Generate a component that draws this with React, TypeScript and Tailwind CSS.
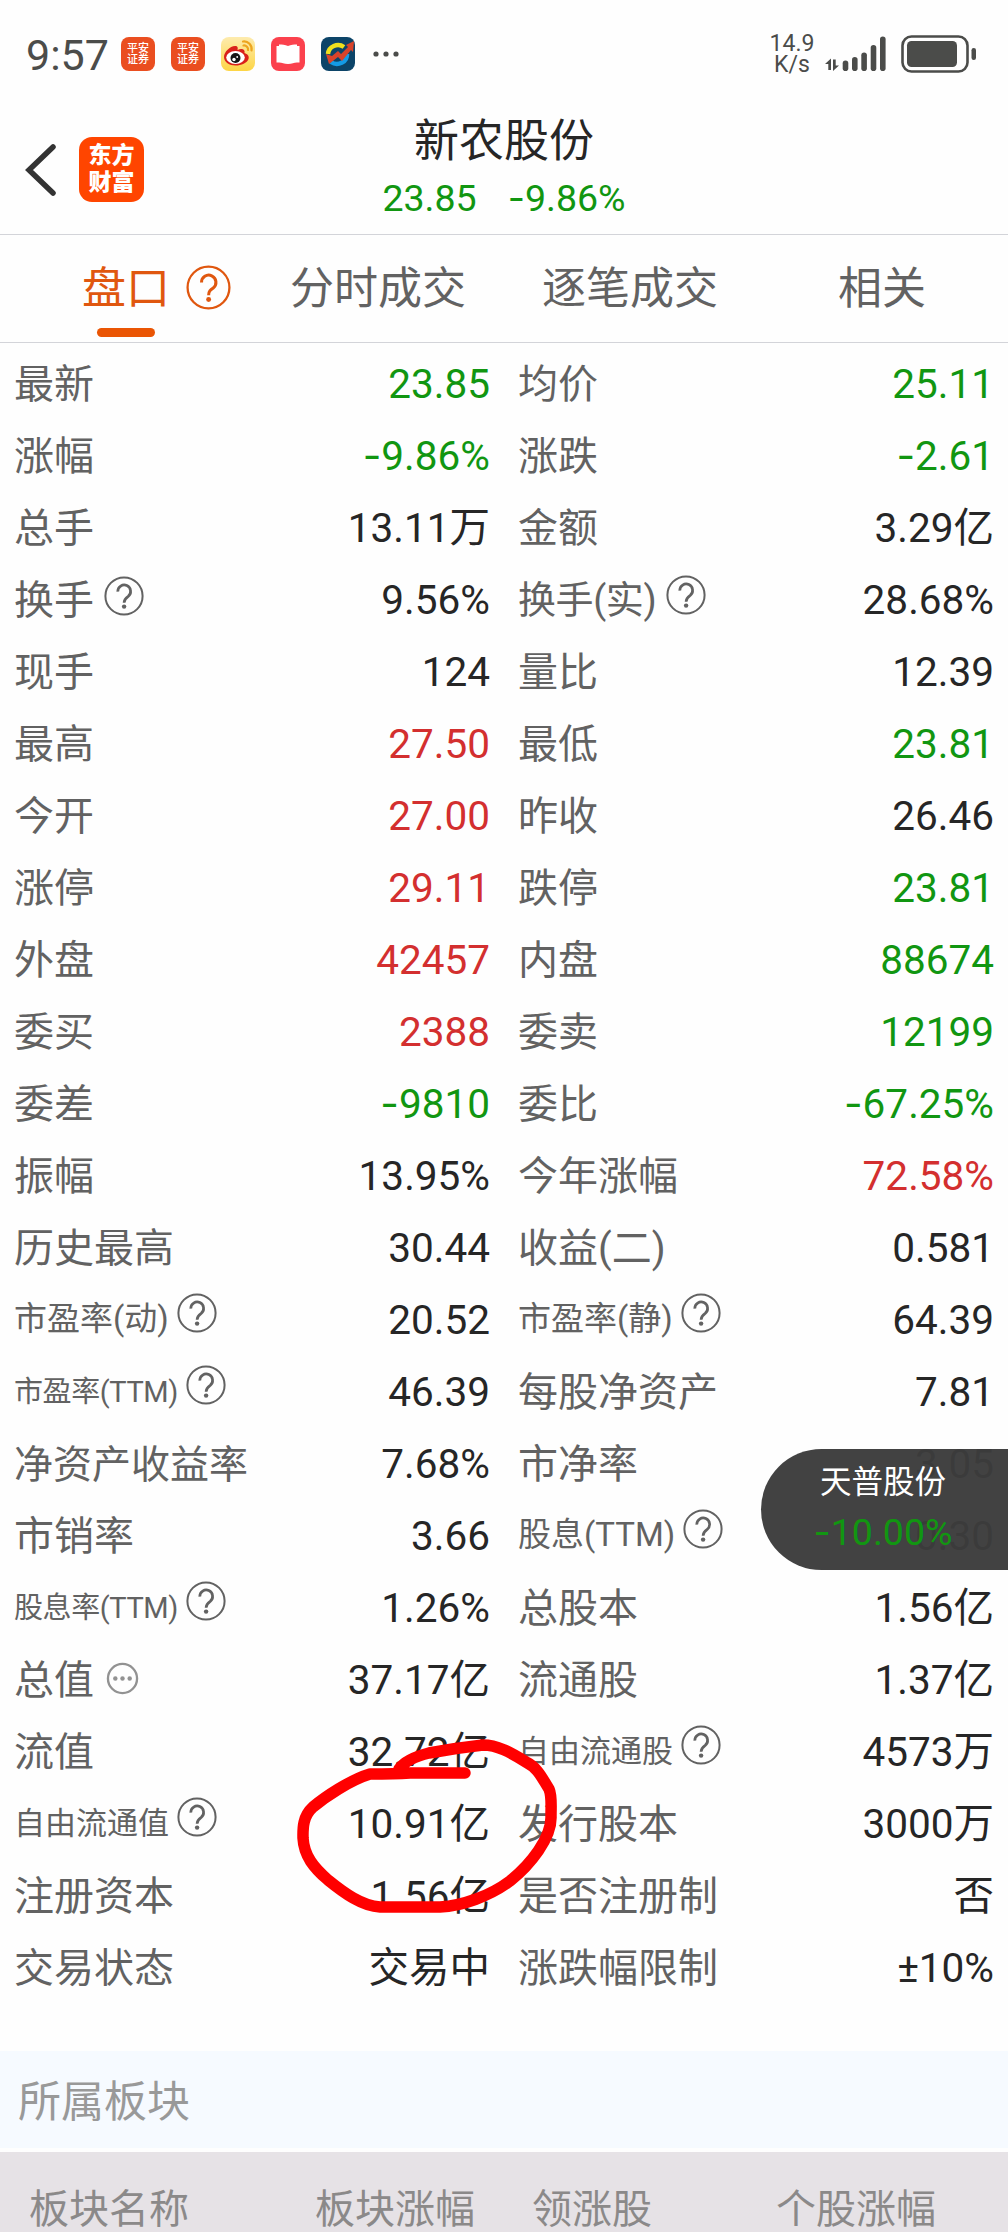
import React from 'react';

type Tone = 'up' | 'down' | 'flat';
type Size = 'lg' | 'md' | 'sm' | 'xs' | 'six' | 'paren';

interface Cell {
  label: string;
  value: string;
  tone?: Tone;
  size?: Size;
  icon?: 'help' | 'more';
}

const rows: [Cell, Cell][] = [
  [{ label: '最新', value: '23.85', tone: 'down' }, { label: '均价', value: '25.11', tone: 'down' }],
  [{ label: '涨幅', value: '-9.86%', tone: 'down' }, { label: '涨跌', value: '-2.61', tone: 'down' }],
  [{ label: '总手', value: '13.11万' }, { label: '金额', value: '3.29亿' }],
  [{ label: '换手', value: '9.56%', icon: 'help' }, { label: '换手(实)', value: '28.68%', icon: 'help', size: 'paren' }],
  [{ label: '现手', value: '124' }, { label: '量比', value: '12.39' }],
  [{ label: '最高', value: '27.50', tone: 'up' }, { label: '最低', value: '23.81', tone: 'down' }],
  [{ label: '今开', value: '27.00', tone: 'up' }, { label: '昨收', value: '26.46' }],
  [{ label: '涨停', value: '29.11', tone: 'up' }, { label: '跌停', value: '23.81', tone: 'down' }],
  [{ label: '外盘', value: '42457', tone: 'up' }, { label: '内盘', value: '88674', tone: 'down' }],
  [{ label: '委买', value: '2388', tone: 'up' }, { label: '委卖', value: '12199', tone: 'down' }],
  [{ label: '委差', value: '-9810', tone: 'down' }, { label: '委比', value: '-67.25%', tone: 'down' }],
  [{ label: '振幅', value: '13.95%' }, { label: '今年涨幅', value: '72.58%', tone: 'up' }],
  [{ label: '历史最高', value: '30.44' }, { label: '收益(二)', value: '0.581' }],
  [{ label: '市盈率(动)', value: '20.52', icon: 'help', size: 'md' }, { label: '市盈率(静)', value: '64.39', icon: 'help', size: 'md' }],
  [{ label: '市盈率(TTM)', value: '46.39', icon: 'help', size: 'xs' }, { label: '每股净资产', value: '7.81' }],
  [{ label: '净资产收益率', value: '7.68%', size: 'six' }, { label: '市净率', value: '3.05' }],
  [{ label: '市销率', value: '3.66' }, { label: '股息(TTM)', value: '0.30', icon: 'help', size: 'md' }],
  [{ label: '股息率(TTM)', value: '1.26%', icon: 'help', size: 'xs' }, { label: '总股本', value: '1.56亿' }],
  [{ label: '总值', value: '37.17亿', icon: 'more' }, { label: '流通股', value: '1.37亿' }],
  [{ label: '流值', value: '32.72亿' }, { label: '自由流通股', value: '4573万', icon: 'help', size: 'sm' }],
  [{ label: '自由流通值', value: '10.91亿', icon: 'help', size: 'sm' }, { label: '发行股本', value: '3000万' }],
  [{ label: '注册资本', value: '1.56亿' }, { label: '是否注册制', value: '否' }],
  [{ label: '交易状态', value: '交易中' }, { label: '涨跌幅限制', value: '±10%' }],
];

const toneClass: Record<Tone, string> = {
  up: 'text-[#d32f2f]',
  down: 'text-[#119611]',
  flat: 'text-[#262626]',
};

const sizeClass: Record<Size, string> = {
  lg: 'text-[40px] mt-[1px]',
  six: 'text-[39px] mt-[1px]',
  paren: 'text-[38px] tracking-[-0.4px] -mt-[1px]',
  md: 'text-[33px] -mt-[2px]',
  sm: 'text-[31px]',
  xs: 'text-[29px] tracking-[-0.4px]',
};

const tabs = ['盘口', '分时成交', '逐笔成交', '相关'];

const HelpIcon = ({ className = 'size-10' }: { className?: string }) => (
  <svg viewBox="0 0 40 40" className={`shrink-0 ${className}`} fill="none" stroke="currentColor">
    <circle cx="20" cy="20" r="18.6" strokeWidth="2" />
    <path d="M13.8 15.6a6.4 6.4 0 1 1 10.4 4.8c-2.6 1.9-4.1 3-4.1 6.4" strokeWidth="2.7" />
    <circle cx="20.1" cy="30.6" r="2.2" fill="currentColor" stroke="none" />
  </svg>
);

const MoreIcon = () => (
  <svg viewBox="0 0 34 34" className="ml-[12px] size-[33px] shrink-0 -mt-[3px] text-[#929292]" fill="none" stroke="currentColor">
    <circle cx="17" cy="17" r="15" strokeWidth="2.4" />
    <g fill="currentColor" stroke="none">
      <circle cx="9.600" cy="17" r="2.300" />
      <circle cx="17" cy="17" r="2.300" />
      <circle cx="24.400" cy="17" r="2.300" />
    </g>
  </svg>
);

// The minus sign is wider than Roboto's hyphen
const Num = ({ text }: { text: string }) =>
  text.startsWith('-') ? (
    <>
      <span className="font-[Inter]">-</span>
      {text.slice(1)}
    </>
  ) : (
    <>{text}</>
  );

const DataCell = ({ label, value, tone = 'flat', size = 'lg', icon }: Cell) => (
  <div className="flex h-full w-1/2 items-center justify-between pl-[14px] pr-[14px]">
    <div className="flex items-center text-[#626262]">
      <span className={`leading-[60px] whitespace-nowrap ${sizeClass[size]}`}>{label}</span>
      {icon === 'help' && (
        <HelpIcon
          className={
            size === 'lg' ? 'size-10 ml-[10px] -mt-[9px]' : size === 'paren' ? 'size-10 ml-[10px] -mt-[10px]' : 'size-10 ml-[8px] -mt-[14px]'
          }
        />
      )}
      {icon === 'more' && <MoreIcon />}
    </div>
    <span className={`text-[40.500px] leading-[60px] whitespace-nowrap ${toneClass[tone]}`}>
      <Num text={value} />
    </span>
  </div>
);

const PinganIcon = () => (
  <div className="flex size-[34px] flex-col items-center justify-center rounded-[8px] bg-[#ea4e20] text-[11px] leading-[11px] font-medium text-white">
    <span>平安</span>
    <span>证券</span>
  </div>
);

const StatusBar = () => (
  <div className="flex h-[108px] items-center justify-between pl-[26px] pr-[31px] text-[#4b4c4a]">
    <div className="flex items-center gap-4">
      <span className="w-[79px] text-[43px] leading-[50px] pt-[1px]">9:57</span>
      <PinganIcon />
      <PinganIcon />
      <svg viewBox="0 0 34 34" className="size-[34px]">
        <defs>
          <linearGradient id="weibo" x1="0" y1="0" x2="0" y2="1">
            <stop offset="0" stopColor="#fdebae" />
            <stop offset="1" stopColor="#fdd545" />
          </linearGradient>
        </defs>
        <rect width="34" height="34" rx="8" fill="url(#weibo)" />
        <path d="M3 20c0-5 6-11 11-11 3 0 3 2 2.500 4 4-2 8-1 7 3 3 1 5 3 4 6-1.500 4-7 6.500-13 6.500S3 25 3 20Z" fill="#d9201b" />
        <ellipse cx="14.500" cy="20.500" rx="9.300" ry="6.500" fill="#fff" />
        <circle cx="14.500" cy="21" r="5" fill="#151515" />
        <circle cx="13" cy="22.500" r="1.700" fill="#fff" />
        <circle cx="16.200" cy="20" r="0.900" fill="#fff" />
        <path d="M22 4.500c5-.8 9.500 4 8.500 9M22.500 8.500c2.700-.4 5 2 4.500 4.500" fill="none" stroke="#eda51f" strokeWidth="2.200" strokeLinecap="round" />
      </svg>
      <svg viewBox="0 0 34 34" className="size-[34px]">
        <rect width="34" height="34" rx="8" fill="#fb414d" />
        <path d="M8 7.500c3 0 6 0 9 1.500 3-1.500 6-1.500 9-1.500v1.500h2.500V25.500H26c-3 0-5 1.500-9 1.500s-6-1.500-9-1.500H5.500V9H8Z" fill="#fff" />
      </svg>
      <svg viewBox="0 0 34 34" className="size-[34px]">
        <rect width="34" height="34" rx="8" fill="#0c4468" />
        <path d="M7 17a10 9.500 0 0 1 16-7" fill="none" stroke="#efe01e" strokeWidth="4.500" />
        <path d="M26 17a10 9.500 0 0 1-16 8" fill="none" stroke="#149be6" strokeWidth="4.500" />
        <path d="M5 17l6 2 6-5 3 3 7-7-2-2 8-4-1 11-2-2-9 11-4-4-9 7Z" fill="#d8432a" />
      </svg>
      <svg viewBox="0 0 28 8" className="ml-[1px] h-2 w-7" fill="currentColor">
        <circle cx="4" cy="4" r="2.600" />
        <circle cx="14" cy="4" r="2.600" />
        <circle cx="24" cy="4" r="2.600" />
      </svg>
    </div>
    <div className="flex items-center">
      <div className="flex w-[46px] flex-col items-center text-[23px] leading-[21px]">
        <span>14.9</span>
        <span>K/s</span>
      </div>
      <svg viewBox="0 0 64 36" className="ml-[9px] h-9 w-16" fill="currentColor">
        <path d="M1 28l6-5.500V34H4.300v-6ZM15 29.500 9 35V23.500h2.700v6Z" />
        <rect x="18.700" y="24.500" width="5.600" height="10.500" rx="2.800" />
        <rect x="28" y="21" width="5.600" height="14" rx="2.800" />
        <rect x="37.300" y="16.500" width="5.600" height="18.500" rx="2.800" />
        <rect x="46.700" y="9" width="5.600" height="26" rx="2.800" />
        <rect x="56" y="0.500" width="5.600" height="34.500" rx="2.800" />
      </svg>
      <svg viewBox="0 0 76 38" className="ml-[13px] h-[38px] w-[76px]" fill="currentColor">
        <rect x="1.500" y="1.500" width="65" height="35" rx="9" fill="none" stroke="currentColor" strokeWidth="2.600" />
        <rect x="6" y="6" width="50" height="26" rx="4.500" />
        <rect x="70.500" y="13" width="4.500" height="12" rx="2.200" />
      </svg>
    </div>
  </div>
);

const Header = () => (
  <div className="flex h-[127px] items-center justify-between border-b border-[#d3d4d9] pb-[3px]">
    <div className="flex w-[250px] items-center pl-[25px]">
      <svg viewBox="0 0 32 52" className="h-[52px] w-8" fill="none" stroke="#333" strokeWidth="5.500">
        <path d="M28 3 4 26l24 23" strokeLinecap="round" />
      </svg>
      <div className="ml-[22px] flex size-[65px] flex-col items-center justify-center rounded-[13px] bg-[#ff4500] pb-[2px] text-[23px] leading-[27px] font-black text-white">
        <span>东方</span>
        <span>财富</span>
      </div>
    </div>
    <div className="flex flex-col items-center pb-[4px]">
      <h1 className="text-[45px] leading-[60px] text-[#262626]">新农股份</h1>
      <div className="flex gap-[31px] text-[37.500px] leading-[52px] text-[#119611]">
        <span>23.85</span>
        <span>
          <Num text="-9.86%" />
        </span>
      </div>
    </div>
    <div className="w-[250px]" />
  </div>
);

const Tabs = () => (
  <div className="grid h-[108px] grid-cols-4 border-b border-[#d3d4d9] text-[44px] text-[#626262]">
    {tabs.map((tab, i) => (
      <div key={tab} className={`relative flex items-center justify-center pt-[1px] ${i === 0 ? 'text-[#e0570f]' : ''}`}>
        <span className="leading-[60px] whitespace-nowrap">{tab}</span>
        {i === 0 && (
          <>
            <HelpIcon className="absolute left-[186px] top-[30px] size-[45px]" />
            <span className="absolute bottom-[5px] left-[97px] h-[9px] w-[58px] rounded-full bg-[#ea5504]" />
          </>
        )}
      </div>
    ))}
  </div>
);

const App: React.FC = () => {
  return (
    <div className="relative h-[2232px] w-[1008px] overflow-hidden bg-[#fefefe] font-[Roboto,'Noto_Sans_CJK_SC',sans-serif]">
      <StatusBar />
      <Header />
      <Tabs />

      {/* Quote table */}
      <div className="h-[1708px] pt-[5px]">
        {rows.map(([left, right]) => (
          <div key={left.label} className="flex h-[72px] items-center">
            <DataCell {...left} />
            <DataCell {...right} />
          </div>
        ))}
      </div>

      {/* Sectors */}
      <div className="flex h-[97px] items-center bg-[#f6faff] pl-[18px] pt-[5px] text-[43px] text-[#999]">所属板块</div>
      <div className="mt-[4px] flex h-[90px] bg-[#e6e2e6] pt-[28px] pl-[29px] text-[40px] leading-[60px] text-[#8b8989]">
        <span className="w-[286px]">板块名称</span>
        <span className="w-[217px]">板块涨幅</span>
        <span className="w-[244px]">领涨股</span>
        <span>个股涨幅</span>
      </div>

      {/* Floating ticker */}
      <div className="absolute right-0 top-[1449px] flex h-[121px] w-[247px] flex-col items-center rounded-l-full bg-[#3c3c3c]/97 pr-[3px] pt-[11px]">
        <span className="text-[31.500px] leading-[46px] text-white">天普股份</span>
        <span className="text-[37.500px] leading-[52px] text-[#119611]">
          <Num text="-10.00%" />
        </span>
      </div>

      {/* Hand drawn circle */}
      <svg viewBox="260 1650 360 280" className="pointer-events-none absolute left-[260px] top-[1650px] h-[280px] w-[360px]" fill="none" stroke="#ff0000" strokeWidth="11.500" strokeLinecap="round" strokeLinejoin="round">
        <path d="M465 1773H410C395 1774 380 1774 370 1774C350 1780 325 1797 313 1807C302 1817 303 1830 303 1838C304 1856 314 1868 328 1880C344 1893 362 1906 380 1907H440C462 1906 490 1896 510 1881C530 1865 552 1838 551 1816C551 1804 552 1796 549 1789C542 1778 538 1768 526 1762C510 1752 497 1745 483 1745C465 1747 445 1750 429 1753C413 1757 404 1762 399 1769" />
      </svg>
    </div>
  );
};

export default App;
